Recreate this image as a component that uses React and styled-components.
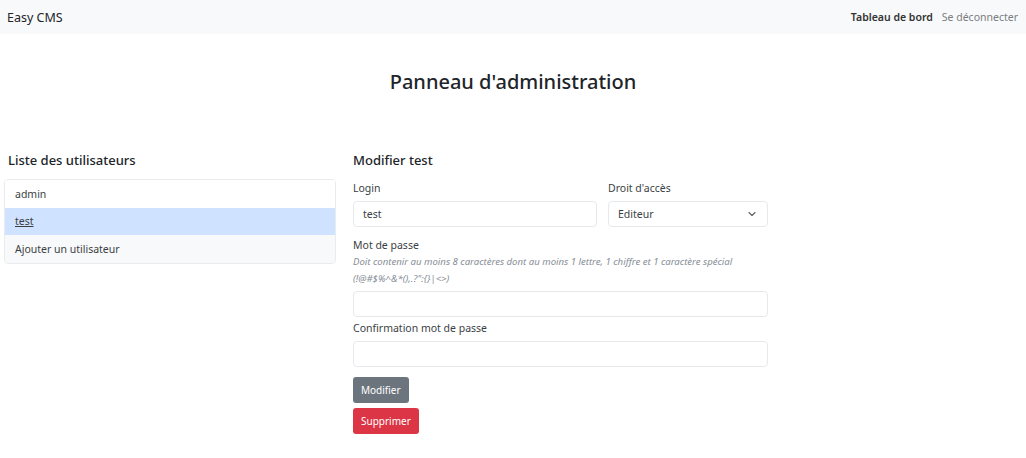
import React from 'react';
import styled, { createGlobalStyle } from 'styled-components';

const GlobalStyle = createGlobalStyle`
  * { box-sizing: border-box; }
  body {
    margin: 0;
    background: #ffffff;
    font-family: "Noto Sans", "Open Sans", sans-serif;
    color: #212529;
  }
`;

const users = ['admin', 'test'];

const App = () => {
  return (
    <>
      <GlobalStyle />
      <Navbar>
        <Brand>Easy CMS</Brand>
        <NavLinks>
          <NavLink active>Tableau de bord</NavLink>
          <NavLink>Se déconnecter</NavLink>
        </NavLinks>
      </Navbar>

      <Title>Panneau d'administration</Title>

      <Content>
        <Sidebar>
          <SectionTitle indent="4px" gap="11px">Liste des utilisateurs</SectionTitle>
          <ListGroup>
            {users.map((u) => (
              <ListItem key={u} active={u === 'test'}>
                {u}
              </ListItem>
            ))}
            <ListItem muted>Ajouter un utilisateur</ListItem>
          </ListGroup>
        </Sidebar>

        <Form>
          <SectionTitle gap="13px">Modifier test</SectionTitle>
          <Row>
            <Field grow>
              <Label>Login</Label>
              <Input defaultValue="test" />
            </Field>
            <Field width="160px">
              <Label>Droit d'accès</Label>
              <SelectBox>
                <span>Editeur</span>
                <svg width="8" height="8" viewBox="0 0 16 16">
                  <path d="M2 5l6 6 6-6" fill="none" stroke="#5a6066" strokeWidth="2.2" strokeLinecap="round" strokeLinejoin="round" />
                </svg>
              </SelectBox>
            </Field>
          </Row>

          <Field mt="11px">
            <Label>Mot de passe</Label>
            <Help>
              Doit contenir au moins 8 caractères dont au moins 1 lettre, 1 chiffre et 1 caractère spécial
              <br />
              (!@#$%^&amp;*(),.?":{'{}'}|&lt;&gt;)
            </Help>
            <Input type="password" />
          </Field>

          <Field mt="4px">
            <Label>Confirmation mot de passe</Label>
            <Input type="password" />
          </Field>

          <Buttons>
            <Button variant="secondary">Modifier</Button>
            <Button variant="danger">Supprimer</Button>
          </Buttons>
        </Form>
      </Content>
    </>
  );
};

export default App;

const Navbar = styled.nav`
  height: 34px;
  background: #f8f9fa;
  display: flex;
  align-items: center;
  justify-content: space-between;
  padding: 0 8px 0 7px;
`;

const Brand = styled.div`
  font-size: 12.5px;
  color: #212529;
`;

const NavLinks = styled.div`
  display: flex;
  gap: 9px;
`;

const NavLink = styled.a`
  font-size: 10.5px;
  font-weight: ${(p) => (p.active ? 600 : 400)};
  color: ${(p) => (p.active ? '#333' : '#7a7d80')};
`;

const Title = styled.h1`
  margin: 36px 0 0;
  text-align: center;
  font-size: 20px;
  font-weight: 500;
  line-height: 24px;
`;

const Content = styled.div`
  display: grid;
  grid-template-columns: 332px 415px;
  column-gap: 17px;
  padding: 58px 0 0 4px;
`;

const Sidebar = styled.div`
  display: flex;
  flex-direction: column;
`;

const SectionTitle = styled.h2`
  margin: 0 0 ${(p) => p.gap || '8px'};
  padding-left: ${(p) => p.indent || 0};
  font-size: 13px;
  font-weight: 500;
  line-height: 16px;
`;

const ListGroup = styled.div`
  border: 1px solid #e9ecef;
  border-radius: 4px;
  overflow: hidden;
`;

const ListItem = styled.div`
  height: 27.5px;
  display: flex;
  align-items: center;
  padding-left: 10px;
  font-size: 10.5px;
  color: #3b3f44;
  background: ${(p) => (p.active ? '#cfe2ff' : p.muted ? '#f8f9fa' : '#fff')};
  text-decoration: ${(p) => (p.active ? 'underline' : 'none')};
`;

const Form = styled.div`
  display: flex;
  flex-direction: column;
`;

const Row = styled.div`
  display: flex;
  gap: 11px;
`;

const Field = styled.div`
  display: flex;
  flex-direction: column;
  flex: ${(p) => (p.grow ? 1 : 'none')};
  width: ${(p) => p.width || 'auto'};
  margin-top: ${(p) => p.mt || 0};
`;

const Label = styled.label`
  font-size: 10.5px;
  line-height: 14px;
  color: #3b3f44;
  margin-bottom: 6px;
`;

const Help = styled.div`
  font-size: 9.6px;
  font-style: italic;
  color: #868e96;
  line-height: 17px;
  margin: -5px 0 4px;
`;

const Input = styled.input`
  height: 26px;
  border: 1px solid #e6e9ec;
  border-radius: 4px;
  padding: 0 9px;
  font-family: inherit;
  font-size: 10.5px;
  color: #3b3f44;
  outline: none;
`;

const SelectBox = styled.div`
  height: 26px;
  border: 1px solid #e6e9ec;
  border-radius: 4px;
  padding: 0 11px 0 9px;
  display: flex;
  align-items: center;
  justify-content: space-between;
  font-size: 10.5px;
  color: #3b3f44;
`;

const Buttons = styled.div`
  display: flex;
  flex-direction: column;
  align-items: flex-start;
  gap: 5px;
  margin-top: 10px;
`;

const Button = styled.button`
  height: 26px;
  padding: 0 8px;
  border: none;
  border-radius: 3px;
  font-family: inherit;
  font-size: 10px;
  color: #fff;
  background: ${(p) => (p.variant === 'danger' ? '#dc3545' : '#6c757d')};
`;
